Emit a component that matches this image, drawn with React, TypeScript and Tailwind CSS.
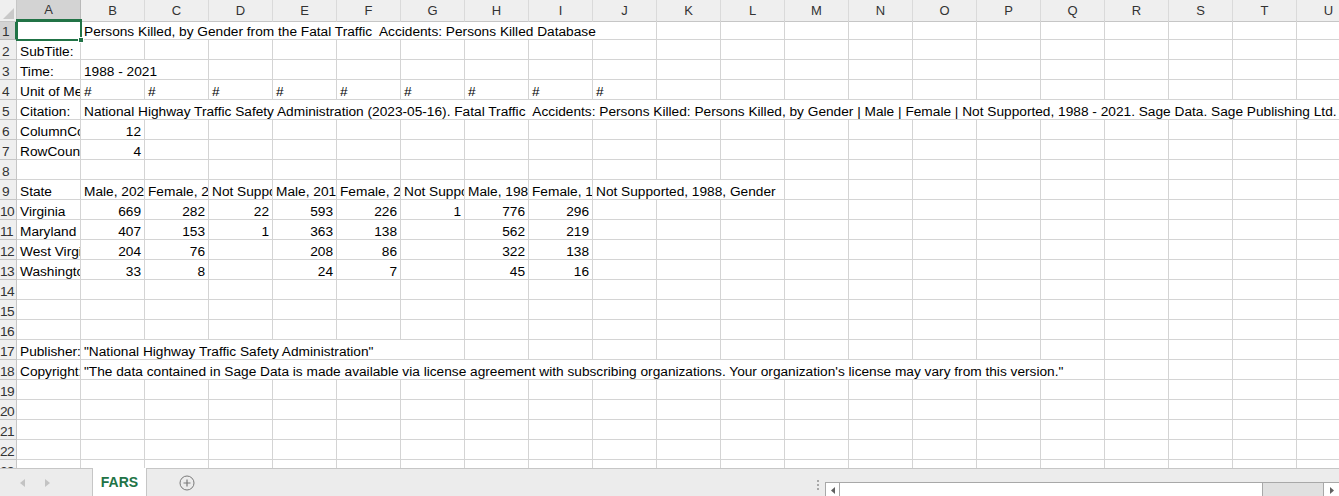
import React from 'react'

type Cell = { c: number; t: string; r?: boolean; span?: number }

const COLS = ['A', 'B', 'C', 'D', 'E', 'F', 'G', 'H', 'I', 'J', 'K', 'L', 'M', 'N', 'O', 'P', 'Q', 'R', 'S', 'T', 'U']

const SPAN: Record<number, string> = {
  1: 'col-span-1',
  2: 'col-span-2',
  3: 'col-span-3',
  6: 'col-span-6',
  9: 'col-span-9',
  16: 'col-span-16',
  20: 'col-span-20',
}

const hashes: Cell[] = [1, 2, 3, 4, 5, 6, 7, 8, 9].map((c) => ({ c, t: '#' }))

const nums = (state: string, vals: (string | null)[]): Cell[] => [
  { c: 0, t: state },
  ...vals.map((v, i) => ({ c: i + 1, t: v ?? '', r: true })).filter((x) => x.t !== ''),
]

const ROWS: Record<number, Cell[]> = {
  1: [{ c: 1, t: 'Persons Killed, by Gender from the Fatal Traffic  Accidents: Persons Killed Database', span: 9 }],
  2: [{ c: 0, t: 'SubTitle:' }],
  3: [{ c: 0, t: 'Time:' }, { c: 1, t: '1988 - 2021', span: 2 }],
  4: [{ c: 0, t: 'Unit of Measure:' }, ...hashes],
  5: [
    { c: 0, t: 'Citation:' },
    {
      c: 1,
      t: 'National Highway Traffic Safety Administration (2023-05-16). Fatal Traffic  Accidents: Persons Killed: Persons Killed, by Gender | Male | Female | Not Supported, 1988 - 2021. Sage Data. Sage Publishing Ltd.',
      span: 20,
    },
  ],
  6: [{ c: 0, t: 'ColumnCount:' }, { c: 1, t: '12', r: true }],
  7: [{ c: 0, t: 'RowCount:' }, { c: 1, t: '4', r: true }],
  9: [
    { c: 0, t: 'State' },
    { c: 1, t: 'Male, 2021, Gender' },
    { c: 2, t: 'Female, 2021, Gender' },
    { c: 3, t: 'Not Supported, 2021, Gender' },
    { c: 4, t: 'Male, 2018, Gender' },
    { c: 5, t: 'Female, 2018, Gender' },
    { c: 6, t: 'Not Supported, 2018, Gender' },
    { c: 7, t: 'Male, 1988, Gender' },
    { c: 8, t: 'Female, 1988, Gender' },
    { c: 9, t: 'Not Supported, 1988, Gender', span: 3 },
  ],
  10: nums('Virginia', ['669', '282', '22', '593', '226', '1', '776', '296']),
  11: nums('Maryland', ['407', '153', '1', '363', '138', null, '562', '219']),
  12: nums('West Virginia', ['204', '76', null, '208', '86', null, '322', '138']),
  13: nums('Washington, DC', ['33', '8', null, '24', '7', null, '45', '16']),
  17: [{ c: 0, t: 'Publisher:' }, { c: 1, t: '"National Highway Traffic Safety Administration"', span: 6 }],
  18: [
    { c: 0, t: 'Copyright:' },
    {
      c: 1,
      t: '"The data contained in Sage Data is made available via license agreement with subscribing organizations. Your organization\'s license may vary from this version."',
      span: 16,
    },
  ],
}

function Row({ n }: { n: number }) {
  const cells = ROWS[n] ?? []
  const out: React.ReactNode[] = []
  let c = 0
  while (c < 21) {
    const cell = cells.find((x) => x.c === c)
    const span = cell?.span ?? 1
    out.push(
      <div
        key={c}
        className={`${SPAN[span]} h-[20px] border-r border-b border-[#d4d4d4] overflow-hidden whitespace-pre flex items-end px-[3px] ${cell?.r ? 'justify-end' : ''}`}
      >
        {cell && <span className="leading-[15px]">{cell.t}</span>}
      </div>
    )
    c += span
  }
  const sel = n === 1
  return (
    <div className="grid grid-cols-[17px_repeat(21,64px)]">
      <div
        className={`h-[20px] border-b border-r flex items-end justify-start pl-[1px] overflow-visible text-[#333] ${
          sel ? 'bg-[#d3d3d3] border-b-[#b9b9b9] border-r-[#217346] border-r-2' : 'bg-[#efefef] border-[#c6c6c6]'
        }`}
      >
        <span className={`leading-[15px] tracking-[-0.6px] ${n > 9 ? '-ml-[1px]' : 'ml-[1px]'}`}>{n}</span>
      </div>
      {out}
    </div>
  )
}

export default function App() {
  const rows = Array.from({ length: 23 }, (_, i) => i + 1)
  return (
    <div className="w-[1339px] h-[496px] overflow-hidden bg-white text-[13.7px] text-black font-['Liberation_Sans',Arial,sans-serif] flex flex-col">
      <div className="relative flex-1 overflow-hidden">
        {/* column headers */}
        <div className="grid grid-cols-[17px_repeat(21,64px)] h-[20px]">
          <div className="relative bg-[#efefef] border-r border-b border-[#c6c6c6]">
            <svg className="absolute right-[2px] bottom-[2px]" width="11" height="11" viewBox="0 0 11 11">
              <polygon points="11,0 11,11 0,11" fill="#c9c9c9" />
            </svg>
          </div>
          {COLS.map((col, i) => (
            <div
              key={col}
              className={`flex items-center justify-center text-[13px] text-[#333] border-r ${
                i === 0
                  ? 'bg-[#d3d3d3] border-r-[#b9b9b9] border-b-2 border-b-[#217346]'
                  : 'bg-[#efefef] border-[#dadada] border-b border-b-[#c6c6c6]'
              }`}
            >
              {col}
            </div>
          ))}
        </div>
        {rows.map((n) => (
          <Row key={n} n={n} />
        ))}
        {/* active cell A1 */}
        <div className="absolute left-[16px] top-[19px] w-[66px] h-[22px] border-2 border-[#217346] pointer-events-none">
          <div className="absolute right-[-4px] bottom-[-4px] w-[6px] h-[6px] bg-[#217346] border border-white" />
        </div>
      </div>

      {/* sheet tabs bar */}
      <div className="h-[28px] shrink-0 bg-[#ececec] border-t border-[#c6c6c6] flex items-start">
        <div className="w-[92px] h-full flex items-center gap-[20px] pl-[20px]">
          <svg width="5" height="8" viewBox="0 0 5 8">
            <polygon points="5,0 5,8 0,4" fill="#c3c3c3" />
          </svg>
          <svg width="5" height="8" viewBox="0 0 5 8">
            <polygon points="0,0 0,8 5,4" fill="#c3c3c3" />
          </svg>
        </div>
        <div className="w-[55px] h-[29px] -mt-px bg-white border-l border-r border-[#c6c6c6] flex items-center justify-center font-bold text-[14px] text-[#217346]">
          FARS
        </div>
        <div className="w-[80px] h-full flex items-center justify-center">
          <svg width="16" height="16" viewBox="0 0 16 16">
            <circle cx="8" cy="8" r="7" fill="none" stroke="#7a7a7a" strokeWidth="1" />
            <path d="M8 4.5v7M4.5 8h7" stroke="#7a7a7a" strokeWidth="1.2" />
          </svg>
        </div>
        <div className="flex-1" />
        <div className="w-[14px] h-full flex flex-col items-center justify-center gap-[2px] pt-[4px]">
          <div className="w-[2px] h-[2px] bg-[#a8a8a8]" />
          <div className="w-[2px] h-[2px] bg-[#a8a8a8]" />
          <div className="w-[2px] h-[2px] bg-[#a8a8a8]" />
        </div>
        <div className="w-[514px] h-[16px] mt-[13px] border-l border-t border-[#a8a8a8] flex bg-[#e0e0e0]">
          <div className="w-[13px] h-full bg-white flex items-center justify-center">
            <svg width="4" height="7" viewBox="0 0 4 7">
              <polygon points="4,0 4,7 0,3.5" fill="#606060" />
            </svg>
          </div>
          <div className="w-[424px] h-full bg-white border-l border-r border-[#a8a8a8]" />
          <div className="flex-1" />
          <div className="w-[16px] h-full bg-white border-l border-[#a8a8a8] flex items-center justify-center">
            <svg width="4" height="7" viewBox="0 0 4 7">
              <polygon points="0,0 0,7 4,3.5" fill="#606060" />
            </svg>
          </div>
        </div>
      </div>
    </div>
  )
}
